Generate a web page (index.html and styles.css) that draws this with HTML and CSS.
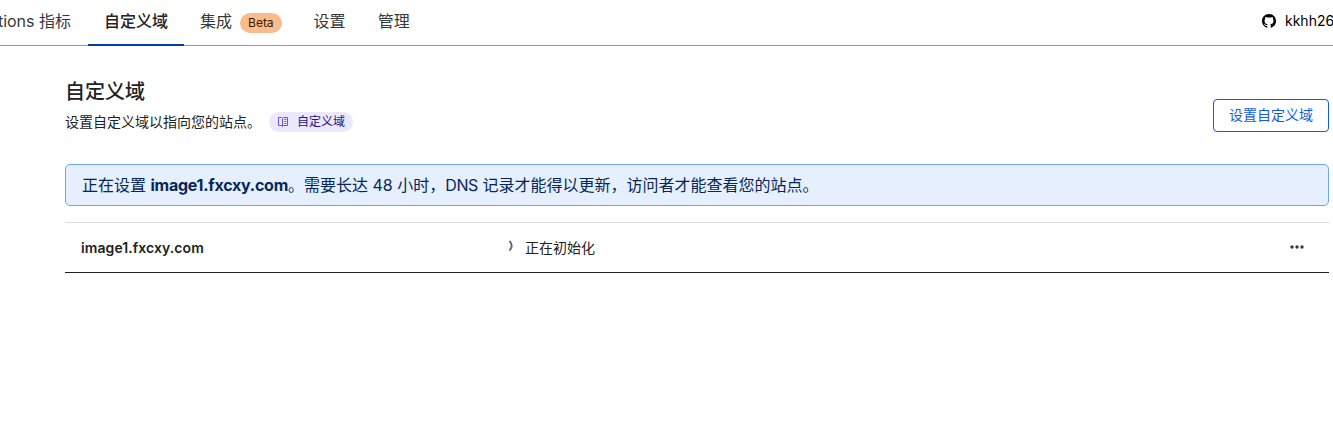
FILE: index.html
```html
<!DOCTYPE html>
<html lang="zh-CN">
<head>
<meta charset="utf-8">
<title>自定义域</title>
<link rel="stylesheet" href="styles.css">
</head>
<body>
<header class="topbar">
  <nav class="tabs">
    <a class="tab tab-first">tions 指标</a>
    <a class="tab tab-active">自定义域</a>
    <a class="tab">集成<span class="beta">Beta</span></a>
    <a class="tab">设置</a>
    <a class="tab">管理</a>
  </nav>
  <div class="account">
    <svg class="github" viewBox="0 0 16 16" fill="#000"><path d="M8 0C3.58 0 0 3.58 0 8c0 3.54 2.29 6.53 5.47 7.59.4.07.55-.17.55-.38 0-.19-.01-.82-.01-1.49-2.01.37-2.53-.49-2.69-.94-.09-.23-.48-.94-.82-1.13-.28-.15-.68-.52-.01-.53.63-.01 1.08.58 1.23.82.72 1.21 1.87.87 2.33.66.07-.52.28-.87.51-1.07-1.78-.2-3.64-.89-3.64-3.95 0-.87.31-1.59.82-2.15-.08-.2-.36-1.02.08-2.12 0 0 .67-.21 2.2.82.64-.18 1.32-.27 2-.27s1.36.09 2 .27c1.53-1.04 2.2-.82 2.2-.82.44 1.1.16 1.92.08 2.12.51.56.82 1.27.82 2.15 0 3.07-1.87 3.75-3.65 3.95.29.25.54.73.54 1.48 0 1.07-.01 1.93-.01 2.2 0 .21.15.46.55.38A8.01 8.01 0 0 0 16 8c0-4.42-3.58-8-8-8z"/></svg>
    <span class="repo">kkhh26</span>
  </div>
</header>
<main class="content">
  <section class="heading">
    <div>
      <h1 class="title">自定义域</h1>
      <div class="subtitle">
        <span>设置自定义域以指向您的站点。</span>
        <a class="doc-link">
          <svg class="book" viewBox="0 0 12 12" fill="none" stroke="#6a4df0"><path d="M5.5 2.5 4.5 1.5h-3v8h3l1 1 1-1h4v-8h-4l-1 1v8"/><path d="M7.3 3.5h2M7.3 5.5h2M7.3 7.5h2"/></svg>
          自定义域
        </a>
      </div>
    </div>
    <button class="setup">设置自定义域</button>
  </section>
  <div class="notice">正在设置 <strong class="host">image1.fxcxy.com</strong>。需要长达 48 小时，<span class="dns">DNS</span> 记录才能得以更新，访问者才能查看您的站点。</div>
  <div class="row">
    <strong class="domain">image1.fxcxy.com</strong>
    <div class="status">
      <svg class="spinner" viewBox="0 0 12 14" fill="none" stroke="#666" stroke-width="2" stroke-linecap="round"><path d="M8 2.5Q11.3 6.8 8 11"/></svg>
      <span>正在初始化</span>
    </div>
    <svg class="more" viewBox="0 0 14 4" fill="#36393a"><circle cx="2" cy="2" r="1.7"/><circle cx="7" cy="2" r="1.7"/><circle cx="12" cy="2" r="1.7"/></svg>
  </div>
</main>
</body>
</html>
```

FILE: styles.css
```css
* { box-sizing: border-box; }
body {
  margin: 0;
  height: 440px;
  overflow: hidden;
  background: #fff;
  color: #222;
  font: 14px/20px Inter, "Noto Sans CJK SC", sans-serif;
  white-space: nowrap;
}
.topbar {
  display: flex;
  justify-content: space-between;
  height: 46px;
  border-bottom: 1px solid #999;
}
.tabs { display: flex; height: 46px; }
.tab {
  display: flex;
  align-items: center;
  padding: 0 16px 4px;
  height: 46px;
  font-size: 16px;
  color: #36393a;
}
.tab-first { width: 88px; padding-left: 0; padding-right: 17px; justify-content: flex-end; }
.tab-active {
  padding-bottom: 2px;
  border-bottom: 2px solid #003bb8;
  font-weight: 500;
  color: #222;
}
.beta {
  margin: 4px 0 0 8px;
  padding: 0 8px;
  border-radius: 10px;
  background: #fbbc8c;
  color: #341a04;
  font-size: 12px;
  line-height: 20px;
}
.account {
  display: flex;
  align-items: center;
  width: 71px;
  height: 42px;
  color: #000;
}
.github { flex: none; width: 14px; height: 14px; margin-right: 9px; }
.content { width: 1264px; margin-left: 65px; }
.heading {
  display: flex;
  justify-content: space-between;
  height: 118px;
  padding-top: 33px;
}
.title { margin: 0; font-size: 20px; line-height: 26px; font-weight: 500; }
.subtitle { display: flex; align-items: center; margin-top: 7px; }
.doc-link {
  display: flex;
  align-items: center;
  margin-left: 8px;
  padding: 0 8px;
  height: 20px;
  border-radius: 10px;
  background: #ebe8fc;
  color: #27118f;
  font-size: 12px;
}
.book { width: 12px; height: 12px; margin-right: 8px; }
.setup {
  width: 116px;
  height: 33px;
  margin-top: 20px;
  padding: 0 0 2px;
  border: 1px solid #0f5bea;
  border-radius: 4px;
  background: #fff;
  color: #0f5bea;
  font: inherit;
}
.notice {
  height: 42px;
  padding: 0 16px;
  border: 1px solid #6ba4f8;
  border-radius: 5px;
  background: #e6effe;
  color: #03275c;
  font-size: 16px;
  line-height: 40px;
}
.host { letter-spacing: -.25px; }
.dns { letter-spacing: -.4px; }
.row {
  display: grid;
  grid-template-columns: 421px 1fr 14px;
  align-items: center;
  height: 51px;
  margin-top: 16px;
  padding: 0 25px 0 16px;
  border-top: 1px solid #ddd;
  border-bottom: 1px solid #1d1f20;
}
.domain { font-weight: 600; letter-spacing: .08px; }
.status { display: flex; align-items: center; }
.spinner { width: 12px; height: 14px; margin: 0 11px 4px 0; }
.more { width: 14px; height: 4px; margin-bottom: 2px; }
```
